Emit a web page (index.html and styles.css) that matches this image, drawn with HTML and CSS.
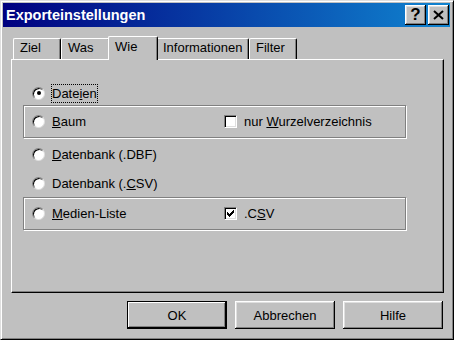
FILE: index.html
```html
<!DOCTYPE html>
<html>
<head>
<meta charset="utf-8">
<link rel="stylesheet" href="styles.css">
</head>
<body>
<div class="window">
  <div class="titlebar">
    <span class="title">Exporteinstellungen</span>
    <div class="caption-buttons">
      <div class="cap-btn help">?</div>
      <div class="cap-btn close">
        <svg width="11" height="10" viewBox="0 0 11 10"><path d="M1 1L10 9M10 1L1 9" stroke="#000" stroke-width="2" fill="none"/></svg>
      </div>
    </div>
  </div>
  <div class="body">
    <div class="tabs">
      <div class="tab tab-ziel">Ziel</div>
      <div class="tab tab-was">Was</div>
      <div class="tab tab-wie selected">Wie</div>
      <div class="tab tab-info">Informationen</div>
      <div class="tab tab-filter">Filter</div>
    </div>
    <div class="panel">
      <div class="row plain first">
        <span class="radio checked"></span><span class="label focus">Date<u>i</u>en</span>
      </div>
      <div class="row group">
        <div class="opt"><span class="radio"></span><span class="label"><u>B</u>aum</span></div>
        <div class="opt-chk"><span class="checkbox"></span><span class="label">nur <u>W</u>urzelverzeichnis</span></div>
      </div>
      <div class="row plain dbf">
        <span class="radio"></span><span class="label"><u>D</u>atenbank (.DBF)</span>
      </div>
      <div class="row plain csv">
        <span class="radio"></span><span class="label">Datenbank (.<u>C</u>SV)</span>
      </div>
      <div class="row group medien">
        <div class="opt"><span class="radio"></span><span class="label"><u>M</u>edien-Liste</span></div>
        <div class="opt-chk"><span class="checkbox checked">
          <svg width="7" height="7" viewBox="0 0 7 7"><path d="M6 0h1v3h-1zM5 1h1v3h-1zM4 2h1v3h-1zM3 3h1v3h-1zM2 4h1v3h-1zM1 3h1v3h-1zM0 2h1v3h-1z" fill="#000"/></svg>
        </span><span class="label">.C<u>S</u>V</span></div>
      </div>
    </div>
    <div class="buttons">
      <div class="btn default">OK</div>
      <div class="btn">Abbrechen</div>
      <div class="btn">Hilfe</div>
    </div>
  </div>
</div>
</body>
</html>
```
FILE: styles.css
```css
* { box-sizing: border-box; }
html, body { margin: 0; padding: 0; }
body {
  width: 454px;
  height: 340px;
  overflow: hidden;
  background: #c0c0c0;
  font-family: "Liberation Sans", Arial, sans-serif;
  font-size: 13px;
  color: #000;
}
.window {
  width: 454px;
  height: 340px;
  border: 1px solid;
  border-color: #dfdfdf #000 #000 #dfdfdf;
  box-shadow: inset 1px 1px #fff, inset -1px -1px #808080;
  padding: 2px;
  display: flex;
  flex-direction: column;
}
.titlebar {
  height: 24px;
  margin-right: 1px;
  padding: 0 1px 0 3px;
  display: flex;
  align-items: center;
  background: linear-gradient(to right, #000080, #1084d0);
}
.title {
  color: #fff;
  font-weight: bold;
  font-size: 14.5px;
  line-height: 16px;
}
.caption-buttons {
  margin-left: auto;
  display: flex;
  gap: 2px;
}
.cap-btn {
  width: 21px;
  height: 20px;
  background: #c0c0c0;
  box-shadow: inset -1px -1px #000, inset 1px 1px #fff, inset -2px -2px #808080, inset 2px 2px #dfdfdf;
  display: flex;
  align-items: center;
  justify-content: center;
}
.help {
  font-weight: bold;
  font-size: 17px;
  line-height: 16px;
  padding-bottom: 1px;
}
.body {
  flex: 1;
  padding: 0 7px 0 8px;
  display: flex;
  flex-direction: column;
}
.tabs {
  margin-top: 9px;
  height: 23px;
  padding-left: 2px;
  display: flex;
  align-items: flex-end;
}
.tab {
  height: 21px;
  padding: 1px 0 0 6px;
  line-height: 15px;
  border-left: 1px solid #fff;
  border-top: 1px solid #fff;
  border-right: 1px solid #000;
  border-radius: 2px 2px 0 0;
  box-shadow: inset -1px 0 #808080;
  background: #c0c0c0;
  flex: none;
}
.tab-ziel { width: 48px; }
.tab-was { width: 49px; }
.tab-wie { width: 46px; }
.tab-info { width: 93px; }
.tab-filter { width: 48px; }
.tab.selected {
  width: 50px;
  height: 24px;
  margin: 0 -2px -1px -2px;
  padding: 2px 0 0 6px;
  position: relative;
  z-index: 1;
}
.panel {
  height: 234px;
  border-left: 1px solid #fff;
  border-top: 1px solid #fff;
  border-right: 1px solid #000;
  border-bottom: 1px solid #000;
  box-shadow: inset -1px -1px #808080;
  padding: 23px 0 0 11px;
  display: flex;
  flex-direction: column;
}
.row {
  width: 383px;
  display: flex;
  align-items: center;
  flex: none;
}
.row.plain {
  height: 20px;
  padding-left: 9px;
}
.row.group {
  height: 33px;
  margin-top: 2px;
  padding-left: 8px;
  border: 1px solid #808080;
  box-shadow: inset 1px 1px #fff, 1px 1px #fff;
}
.row.dbf { margin-top: 6px; }
.row.csv { margin-top: 9px; }
.row.medien { margin-top: 4px; }
.opt {
  width: 192px;
  display: flex;
  align-items: center;
}
.opt-chk {
  display: flex;
  align-items: center;
}
.radio {
  width: 13px;
  height: 13px;
  flex: none;
  border-radius: 50%;
  background: #fff;
  border: 1px solid;
  border-color: #808080 #dfdfdf #dfdfdf #808080;
  box-shadow: inset 1px 1px #000, inset -1px -1px #fff;
  margin-right: 6px;
  position: relative;
}
.radio.checked::after {
  content: "";
  position: absolute;
  left: 3.5px;
  top: 3.5px;
  width: 4px;
  height: 4px;
  border-radius: 50%;
  background: #000;
}
.checkbox {
  width: 13px;
  height: 13px;
  flex: none;
  background: #fff;
  border: 1px solid;
  border-color: #808080 #fff #fff #808080;
  box-shadow: inset 1px 1px #000, inset -1px -1px #dfdfdf;
  margin-right: 6px;
  display: flex;
  align-items: center;
  justify-content: center;
}
.checkbox svg { display: block; }
.label {
  border: 1px solid transparent;
  line-height: 15px;
  padding: 1px 0 1px 0;
  white-space: nowrap;
}
.label.focus {
  border: 1px dotted #000;
}
.buttons {
  margin-top: 8px;
  padding-right: 1px;
  display: flex;
  justify-content: flex-end;
  gap: 8px;
}
.btn {
  width: 100px;
  height: 28px;
  display: flex;
  align-items: center;
  justify-content: center;
  background: #c0c0c0;
  box-shadow: inset -1px -1px #000, inset 1px 1px #fff, inset -2px -2px #808080, inset 2px 2px #dfdfdf;
}
.btn.default {
  border: 1px solid #000;
  box-shadow: inset -1px -1px #000, inset 1px 1px #fff, inset -2px -2px #808080;
}
```
